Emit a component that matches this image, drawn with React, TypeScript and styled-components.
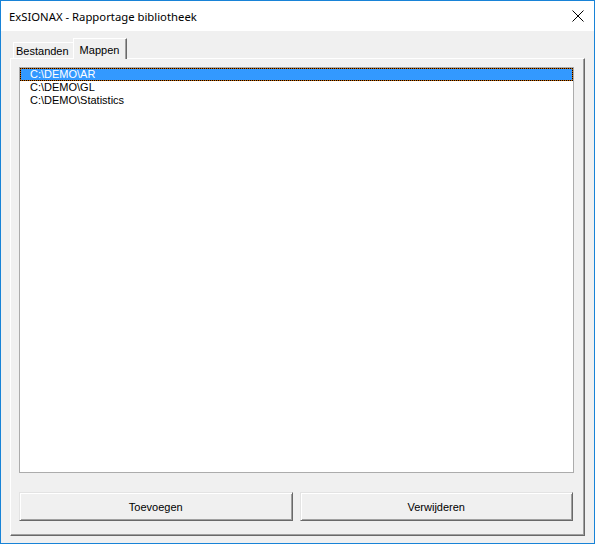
import React from "react";
import styled, { createGlobalStyle } from "styled-components";

const GlobalStyle = createGlobalStyle`
  html, body {
    margin: 0;
    padding: 0;
    background: #ffffff;
  }
  * {
    box-sizing: border-box;
  }
`;

const Window = styled.div`
  width: 595px;
  height: 544px;
  border: 1px solid #1883d7;
  display: flex;
  flex-direction: column;
  background: #f0f0f0;
  font-family: "Liberation Sans", Arial, sans-serif;
  font-size: 11px;
  color: #000;
`;

const TitleBar = styled.div`
  height: 30px;
  flex: none;
  background: #ffffff;
  display: flex;
  align-items: center;
  justify-content: space-between;
  padding: 0 8px 0 8px;
`;

const Title = styled.span`
  font-family: "Noto Sans", "Liberation Sans", sans-serif;
  font-size: 11.3px;
  color: #000;
`;

const CloseButton = styled.div`
  width: 14px;
  height: 14px;
  display: flex;
  align-items: center;
  justify-content: center;
  margin-right: 1px;
`;

const Body = styled.div`
  flex: 1;
  display: flex;
  flex-direction: column;
  padding: 7px 9px 7px 9px;
`;

const TabStrip = styled.div`
  display: flex;
  align-items: flex-end;
  height: 20px;
  padding-left: 3px;
  position: relative;
  z-index: 1;
`;

const Tab = styled.div<{ $active?: boolean }>`
  height: ${(p) => (p.$active ? "21px" : "16px")};
  margin-bottom: ${(p) => (p.$active ? "-1px" : "0")};
  margin-left: ${(p) => (p.$active ? "-1px" : "0")};
  padding: ${(p) => (p.$active ? "1px 7px 0 6px" : "0 4px 0 2px")};
  display: flex;
  align-items: center;
  background: #f0f0f0;
  border-top: 1px solid #ffffff;
  border-left: 1px solid #ffffff;
  border-right: 1px solid #696969;
  box-shadow: ${(p) => (p.$active ? "inset -1px 0 0 #a0a0a0" : "none")};
  white-space: nowrap;
`;

const Page = styled.div`
  flex: 1;
  display: flex;
  flex-direction: column;
  border-top: 1px solid #ffffff;
  border-left: 1px solid #ffffff;
  border-right: 1px solid #696969;
  border-bottom: 1px solid #696969;
  box-shadow: inset -1px -1px 0 #a0a0a0;
  padding: 8px 10px 13px 8px;
`;

const ListBox = styled.div`
  height: 406px;
  flex: none;
  background: #ffffff;
  border: 1px solid #acacac;
  display: flex;
  flex-direction: column;
`;

const Row = styled.div<{ $selected?: boolean }>`
  height: 13px;
  line-height: 11px;
  padding-left: 9px;
  border: 1px solid transparent;
  white-space: nowrap;
  color: ${(p) => (p.$selected ? "#ffffff" : "#000000")};
  ${(p) =>
    p.$selected &&
    `
    border: 1px dotted #000000;
    background: linear-gradient(#3399ff, #3399ff) padding-box, #cc6600;
  `}
`;

const ButtonRow = styled.div`
  display: flex;
  gap: 7px;
  margin-top: 19px;
  padding-right: 1px;
`;

const Button = styled.button`
  flex: 1;
  height: 29px;
  font-family: "Liberation Sans", Arial, sans-serif;
  font-size: 11px;
  color: #000;
  background: #f0f0f0;
  border-top: 1px solid #e3e3e3;
  border-left: 1px solid #e3e3e3;
  border-right: 1px solid #696969;
  border-bottom: 1px solid #696969;
  box-shadow: inset 1px 1px 0 #ffffff, inset -1px -1px 0 #a0a0a0;
  padding: 0;
  cursor: default;
`;

const folders = ["C:\\DEMO\\AR", "C:\\DEMO\\GL", "C:\\DEMO\\Statistics"];

export default function App() {
  return (
    <>
      <GlobalStyle />
      <Window>
        <TitleBar>
          <Title>ExSIONAX - Rapportage bibliotheek</Title>
          <CloseButton>
            <svg width="12" height="12" viewBox="0 0 12 12">
              <path d="M0.5 0.5 L11.5 11.5 M11.5 0.5 L0.5 11.5" stroke="#000" strokeWidth="1" fill="none" />
            </svg>
          </CloseButton>
        </TitleBar>
        <Body>
          <TabStrip>
            <Tab>Bestanden</Tab>
            <Tab $active>Mappen</Tab>
          </TabStrip>
          <Page>
            <ListBox>
              {folders.map((f, i) => (
                <Row key={f} $selected={i === 0}>
                  {f}
                </Row>
              ))}
            </ListBox>
            <ButtonRow>
              <Button>Toevoegen</Button>
              <Button>Verwijderen</Button>
            </ButtonRow>
          </Page>
        </Body>
      </Window>
    </>
  );
}
